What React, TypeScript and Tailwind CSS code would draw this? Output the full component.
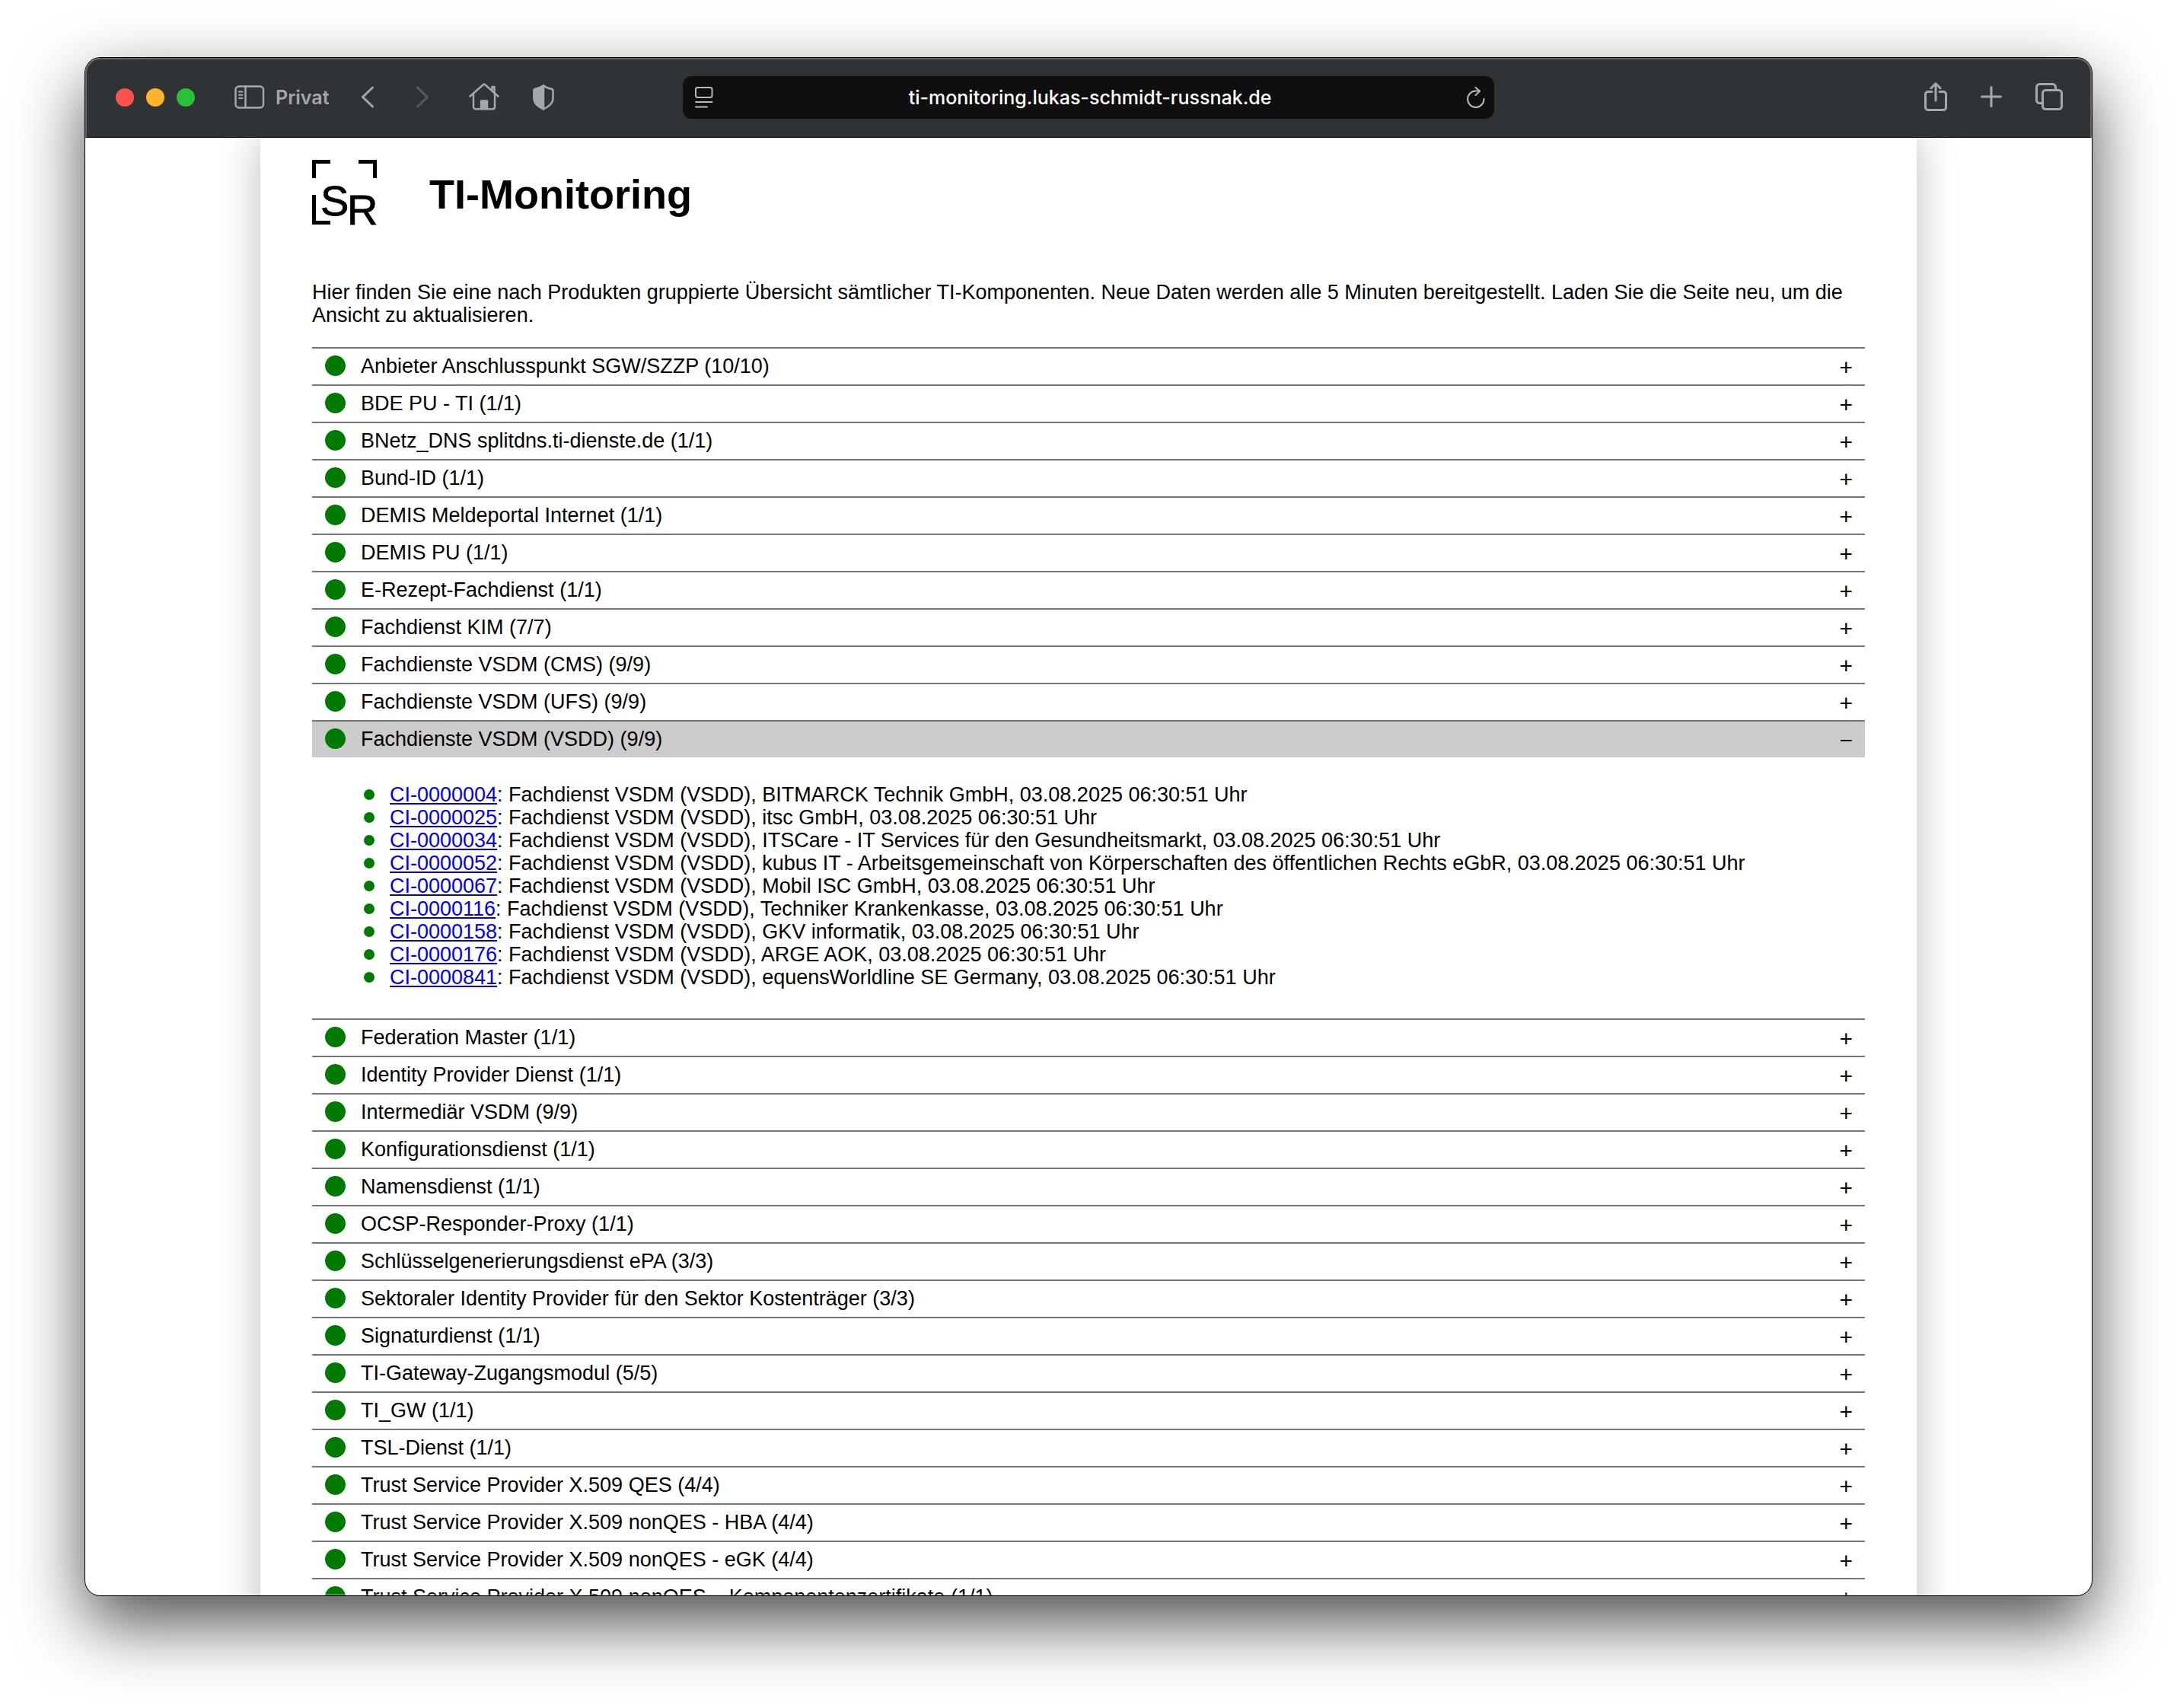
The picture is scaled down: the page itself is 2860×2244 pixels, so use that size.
import { useState } from "react";

type Component = { id: string; owner: string };
type Product = { name: string; count: string; items?: Component[] };

const TIMESTAMP = "03.08.2025 06:30:51 Uhr";

const PRODUCTS: Product[] = [
  { name: "Anbieter Anschlusspunkt SGW/SZZP", count: "10/10" },
  { name: "BDE PU - TI", count: "1/1" },
  { name: "BNetz_DNS splitdns.ti-dienste.de", count: "1/1" },
  { name: "Bund-ID", count: "1/1" },
  { name: "DEMIS Meldeportal Internet", count: "1/1" },
  { name: "DEMIS PU", count: "1/1" },
  { name: "E-Rezept-Fachdienst", count: "1/1" },
  { name: "Fachdienst KIM", count: "7/7" },
  { name: "Fachdienste VSDM (CMS)", count: "9/9" },
  { name: "Fachdienste VSDM (UFS)", count: "9/9" },
  {
    name: "Fachdienste VSDM (VSDD)",
    count: "9/9",
    items: [
      { id: "CI-0000004", owner: "BITMARCK Technik GmbH" },
      { id: "CI-0000025", owner: "itsc GmbH" },
      { id: "CI-0000034", owner: "ITSCare - IT Services für den Gesundheitsmarkt" },
      {
        id: "CI-0000052",
        owner: "kubus IT - Arbeitsgemeinschaft von Körperschaften des öffentlichen Rechts eGbR",
      },
      { id: "CI-0000067", owner: "Mobil ISC GmbH" },
      { id: "CI-0000116", owner: "Techniker Krankenkasse" },
      { id: "CI-0000158", owner: "GKV informatik" },
      { id: "CI-0000176", owner: "ARGE AOK" },
      { id: "CI-0000841", owner: "equensWorldline SE Germany" },
    ],
  },
  { name: "Federation Master", count: "1/1" },
  { name: "Identity Provider Dienst", count: "1/1" },
  { name: "Intermediär VSDM", count: "9/9" },
  { name: "Konfigurationsdienst", count: "1/1" },
  { name: "Namensdienst", count: "1/1" },
  { name: "OCSP-Responder-Proxy", count: "1/1" },
  { name: "Schlüsselgenerierungsdienst ePA", count: "3/3" },
  { name: "Sektoraler Identity Provider für den Sektor Kostenträger", count: "3/3" },
  { name: "Signaturdienst", count: "1/1" },
  { name: "TI-Gateway-Zugangsmodul", count: "5/5" },
  { name: "TI_GW", count: "1/1" },
  { name: "TSL-Dienst", count: "1/1" },
  { name: "Trust Service Provider X.509 QES", count: "4/4" },
  { name: "Trust Service Provider X.509 nonQES - HBA", count: "4/4" },
  { name: "Trust Service Provider X.509 nonQES - eGK", count: "4/4" },
  { name: "Trust Service Provider X.509 nonQES – Komponentenzertifikate", count: "1/1" },
];

const stroke = {
  fill: "none",
  stroke: "currentColor",
  strokeLinecap: "round",
  strokeLinejoin: "round",
} as const;

function SidebarIcon() {
  return (
    <svg width="40" height="32" viewBox="0 0 40 32" {...stroke} strokeWidth="2.5">
      <rect x="1.5" y="1.5" width="36.5" height="28" rx="4.5" />
      <path d="M14.5 1.5v28" />
      <path d="M6 8.500h4.500M6 12.800h4.500M6 17.100h4.500" strokeWidth="2" />
    </svg>
  );
}

function ChevronIcon({ forward = false }: { forward?: boolean }) {
  return (
    <svg width="18" height="30" viewBox="0 0 18 30" {...stroke} strokeWidth="3">
      <path d={forward ? "M2.500 2 15.500 14.500 2.500 27" : "M15.500 2 2.500 14.500l13 12.500"} />
    </svg>
  );
}

function HomeIcon() {
  return (
    <svg width="40" height="38" viewBox="0 0 40 38" {...stroke} strokeWidth="2.5">
      <path d="M1.500 17.500 18.800 2.200a1.800 1.800 0 0 1 2.400 0L38.500 17.500" />
      <path d="M30.500 10V5h3v7.800" />
      <path d="M6 15v16.500a2.700 2.700 0 0 0 2.700 2.700h22.600a2.700 2.700 0 0 0 2.700-2.700V15" />
      <path d="M16 34V23.500h8V34z" fill="currentColor" />
    </svg>
  );
}

function ShieldIcon() {
  return (
    <svg width="28" height="34" viewBox="0 0 28 34" {...stroke} strokeWidth="2.5">
      <path d="M14 1.500c2.500 2 6.500 3.500 10.200 4.300 1.500.3 2.300 1 2.300 2.700v10.300c0 6.700-6.500 10.700-12.500 13.700C8 29.500 1.500 25.500 1.500 18.800V8.500c0-1.700.8-2.400 2.300-2.700C7.500 5 11.500 3.500 14 1.500z" />
      <path
        d="M14 1.500C11.500 3.500 7.500 5 3.800 5.800c-1.500.3-2.300 1-2.300 2.700v10.300C1.500 25.500 8 29.500 14 32.500z"
        fill="currentColor"
      />
    </svg>
  );
}

function PageIcon() {
  return (
    <svg width="24" height="28" viewBox="0 0 24 28" {...stroke} strokeWidth="2">
      <rect x="1" y="1" width="21.500" height="13" rx="2.500" />
      <path d="M1 20h21.500M1 26.500h15" />
    </svg>
  );
}

function ReloadIcon() {
  return (
    <svg width="24" height="28" viewBox="0 0 24 28" {...stroke} strokeWidth="2">
      <path d="M22.500 15.800A10.700 10.700 0 1 1 11.800 5.500h4.700" />
      <path d="M11.500 1l5.500 4.700L11.500 11" />
    </svg>
  );
}

function ShareIcon() {
  return (
    <svg width="30" height="40" viewBox="0 0 30 40" {...stroke} strokeWidth="3">
      <path d="M10 12.500H4.700a3.200 3.200 0 0 0-3.200 3.200v17.600a3.200 3.200 0 0 0 3.200 3.200h20.600a3.200 3.200 0 0 0 3.200-3.200V15.700a3.200 3.200 0 0 0-3.200-3.200H20" />
      <path d="M15 24V2M9 7.800 15 1.700l6 6.100" />
    </svg>
  );
}

function PlusIcon() {
  return (
    <svg width="28" height="30" viewBox="0 0 28 30" {...stroke} strokeWidth="3">
      <path d="M14 1.500v25M1.500 14h25" />
    </svg>
  );
}

function TabsIcon() {
  return (
    <svg width="36" height="38" viewBox="0 0 36 38" {...stroke} strokeWidth="3">
      <rect x="9.500" y="9.500" width="25" height="25" rx="4" />
      <path d="M9.500 26.500H5.500a4 4 0 0 1-4-4v-17a4 4 0 0 1 4-4h17a4 4 0 0 1 4 4v4" />
    </svg>
  );
}

function Toolbar() {
  return (
    <header className="grid h-[105px] shrink-0 grid-cols-[785fr_1066fr_785fr] items-center border-b border-black bg-[#303336] font-['Inter',sans-serif] text-[#a5a8ab]">
      <div className="flex items-center pl-10">
        <div className="mr-[52px] flex gap-4">
          <button aria-label="Schließen" className="size-6 rounded-full bg-[#ff524f]" />
          <button aria-label="Minimieren" className="size-6 rounded-full bg-[#fdb32a]" />
          <button aria-label="Maximieren" className="size-6 rounded-full bg-[#28c138]" />
        </div>
        <button className="mr-[42px] flex items-center gap-3.5 text-[25px] leading-8 font-semibold">
          <SidebarIcon />
          Privat
        </button>
        <button aria-label="Zurück" className="mr-[54px]">
          <ChevronIcon />
        </button>
        <button aria-label="Vorwärts" disabled className="mr-[52px] text-[#585b5d]">
          <ChevronIcon forward />
        </button>
        <button aria-label="Startseite" className="mr-11">
          <HomeIcon />
        </button>
        <button aria-label="Datenschutzbericht">
          <ShieldIcon />
        </button>
      </div>
      <div className="flex h-14 items-center rounded-xl bg-[#0f0f0f] pr-3 pl-4">
        <button aria-label="Seitenmenü" className="text-[#b9b9b9]">
          <PageIcon />
        </button>
        <input
          aria-label="Adresse"
          defaultValue="ti-monitoring.lukas-schmidt-russnak.de"
          className="min-w-0 flex-1 bg-transparent text-center text-[25px] leading-8 font-medium text-white outline-none"
        />
        <button aria-label="Neu laden" className="text-[#b9b9b9]">
          <ReloadIcon />
        </button>
      </div>
      <div className="flex items-center justify-end gap-11 pr-[38px]">
        <button aria-label="Teilen">
          <ShareIcon />
        </button>
        <button aria-label="Neuer Tab">
          <PlusIcon />
        </button>
        <button aria-label="Tabübersicht">
          <TabsIcon />
        </button>
      </div>
    </header>
  );
}

function Logo() {
  return (
    <svg width="88" height="86" viewBox="0 0 88 86" fill="none" stroke="#000" strokeWidth="5" className="shrink-0 overflow-visible">
      <path d="M2.500 24V2.500H24M61 2.500h21.500V24M2.500 46v36.500H24" />
      <g fill="#000" strokeWidth="0.8" fontFamily="Liberation Sans, sans-serif" fontSize="56">
        <text x="11" y="73">
          S
        </text>
        <text x="46" y="85">
          R
        </text>
      </g>
    </svg>
  );
}

function ProductRow({ product }: { product: Product }) {
  const [open, setOpen] = useState(Boolean(product.items));
  return (
    <li className="border-t-2 border-[#757575]">
      <button
        aria-expanded={open}
        onClick={() => setOpen(!open)}
        className={
          open
            ? "flex h-[47px] w-full items-center bg-[#cccccc] pr-4 pb-0.5 pl-[17px] text-left"
            : "flex h-[47px] w-full items-center pr-4 pb-0.5 pl-[17px] text-left"
        }
      >
        <span className="mr-5 size-[27px] shrink-0 rounded-full bg-[#007a00]" />
        <span className="flex-1">
          {product.name} ({product.count})
        </span>
        <span aria-hidden className="pt-1 text-[30px]">
          {open ? "−" : "+"}
        </span>
      </button>
      {open && product.items && (
        <ul className="pt-[34px] pb-[39px] pl-[68px]">
          {product.items.map((item) => (
            <li key={item.id} className="flex items-center">
              <span className="mr-5 size-3.5 shrink-0 rounded-full bg-[#007a00]" />
              <span>
                <a href={`#${item.id}`} className="text-[#0000ee] underline decoration-2 underline-offset-2">
                  {item.id}
                </a>
                : Fachdienst VSDM (VSDD), {item.owner}, {TIMESTAMP}
              </span>
            </li>
          ))}
        </ul>
      )}
    </li>
  );
}

export default function App() {
  return (
    <div className="h-screen overflow-hidden bg-white px-28 pt-[76px] pb-[148px]">
      <div className="relative flex h-full flex-col overflow-hidden rounded-[20px] bg-white shadow-[0_0_0_1px_#000,0_36px_90px_rgba(0,0,0,0.7)]">
        <Toolbar />
        <div className="min-h-0 flex-1 overflow-hidden">
          <main className="mx-auto max-w-[2176px] bg-white px-[68px] pt-[29px] pb-16 font-['Liberation_Sans',Arial,sans-serif] text-[27px] leading-[30px] text-black shadow-[0_0_50px_rgba(0,0,0,0.27)]">
            <div className="flex items-center gap-[66px]">
              <Logo />
              <h1 className="pt-1 text-[54px] leading-[60px] font-bold">TI-Monitoring</h1>
            </div>
            <p className="pt-[73px] pb-[27px]">
              Hier finden Sie eine nach Produkten gruppierte Übersicht sämtlicher TI-Komponenten. Neue Daten werden alle 5
              Minuten bereitgestellt. Laden Sie die Seite neu, um die Ansicht zu aktualisieren.
            </p>
            <ul>
              {PRODUCTS.map((product) => (
                <ProductRow key={product.name} product={product} />
              ))}
            </ul>
          </main>
        </div>
        <div className="pointer-events-none absolute inset-0 rounded-[20px] shadow-[inset_0_0_0_2px_rgba(255,255,255,0.25)]" />
      </div>
    </div>
  );
}
